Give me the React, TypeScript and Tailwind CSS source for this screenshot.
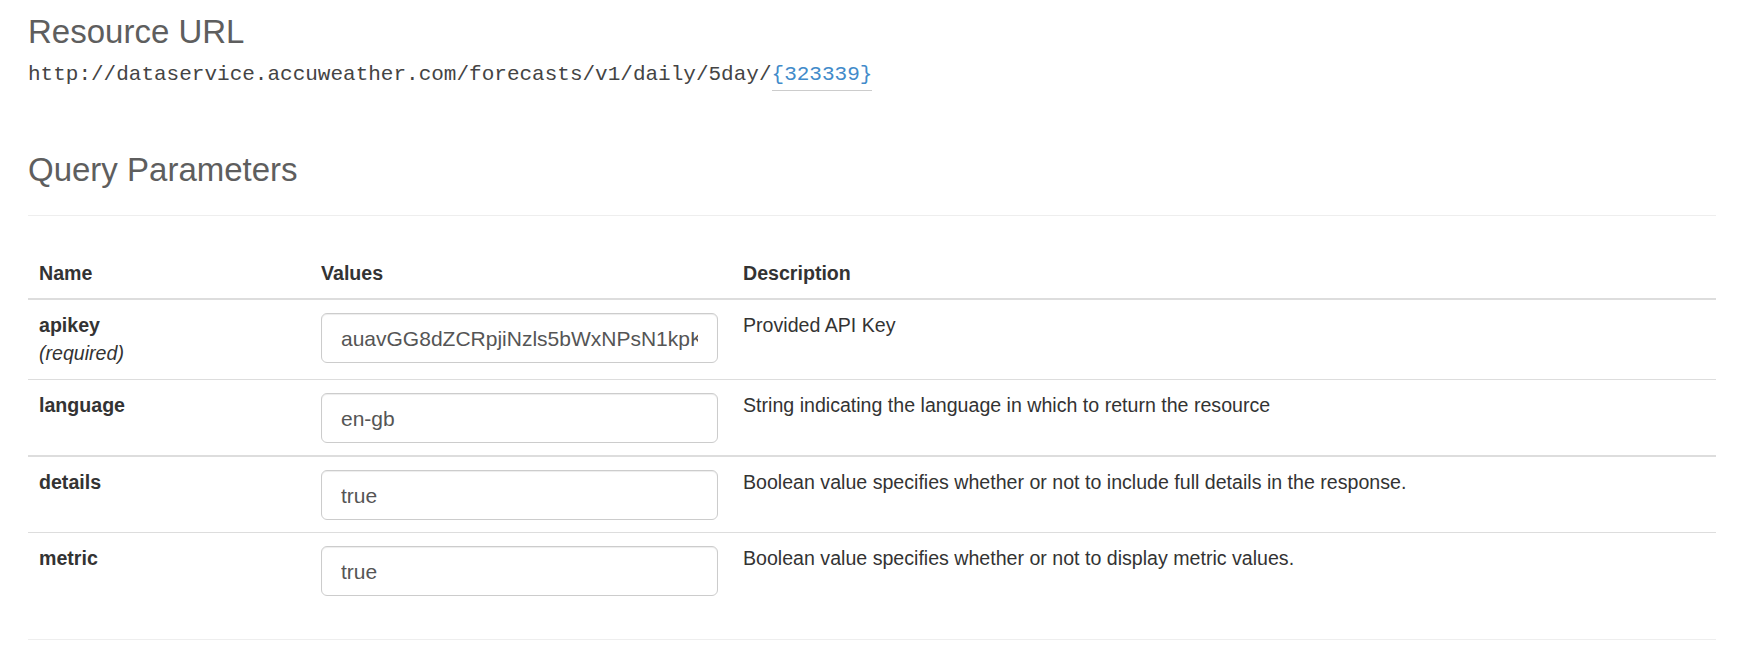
import React from "react";

const rows = [
  { name: "apikey", required: true, value: "auavGG8dZCRpjiNzls5bWxNPsN1kpKxYz", desc: "Provided API Key", row: "pt-[11px] pb-[12px] border-b border-[#ddd]" },
  { name: "language", required: false, value: "en-gb", desc: "String indicating the language in which to return the resource", row: "pt-[11px] pb-[12px] border-b-2 border-[#ddd]" },
  { name: "details", required: false, value: "true", desc: "Boolean value specifies whether or not to include full details in the response.", row: "pt-[11px] pb-[12px] border-b border-[#ddd]" },
  { name: "metric", required: false, value: "true", desc: "Boolean value specifies whether or not to display metric values.", row: "pt-[11px] pb-[11px]" },
];

export default function App() {
  return (
    <div
      className="min-h-[667px] bg-white pl-[28px] pt-[14px] text-[#333]"
      style={{ fontFamily: '"Liberation Sans", Arial, sans-serif' }}
    >
      <div className="w-[1688px]">
        <h3 className="text-[33px] leading-[36px] font-normal text-[#5e5e5e]">Resource URL</h3>
        <div
          className="mt-[11px] text-[21px] leading-[28px] text-[#444]"
          style={{ fontFamily: '"Liberation Mono", "Courier New", monospace' }}
        >
          http://dataservice.accuweather.com/forecasts/v1/daily/5day/
          <span className="text-[#428bca] border-b border-[#ccc] pb-[4px]">{"{323339}"}</span>
        </div>

        <h3 className="mt-[63px] text-[33px] leading-[36px] font-normal text-[#5e5e5e]">Query Parameters</h3>
        <div className="mt-[27px] h-px bg-[#eee]" />

        <div className="mt-[32px] text-[19.6px] leading-[28px]">
          <div className="grid grid-cols-[282px_422px_1fr] border-b-2 border-[#ddd] pt-[11px] pb-[11px] font-bold">
            <div className="px-[11px]">Name</div>
            <div className="px-[11px]">Values</div>
            <div className="px-[11px]">Description</div>
          </div>
          {rows.map((r) => (
            <div key={r.name} className={"grid grid-cols-[282px_422px_1fr] " + r.row}>
              <div className="px-[11px]">
                <div className="font-bold">{r.name}</div>
                {r.required && <div className="italic">(required)</div>}
              </div>
              <div className="px-[11px]">
                <input
                  readOnly
                  value={r.value}
                  className="mt-[2px] block h-[50px] w-[397px] rounded-[6px] border border-[#ccc] bg-white px-[19px] pt-[2px] text-[21px] text-[#555] shadow-[inset_0_1px_1px_rgba(0,0,0,0.075)] outline-none"
                  style={{ fontFamily: '"Liberation Sans", Arial, sans-serif' }}
                />
              </div>
              <div className="px-[11px]">{r.desc}</div>
            </div>
          ))}
        </div>

        <div className="mt-[32px] h-px bg-[#eee]" />
      </div>
    </div>
  );
}
